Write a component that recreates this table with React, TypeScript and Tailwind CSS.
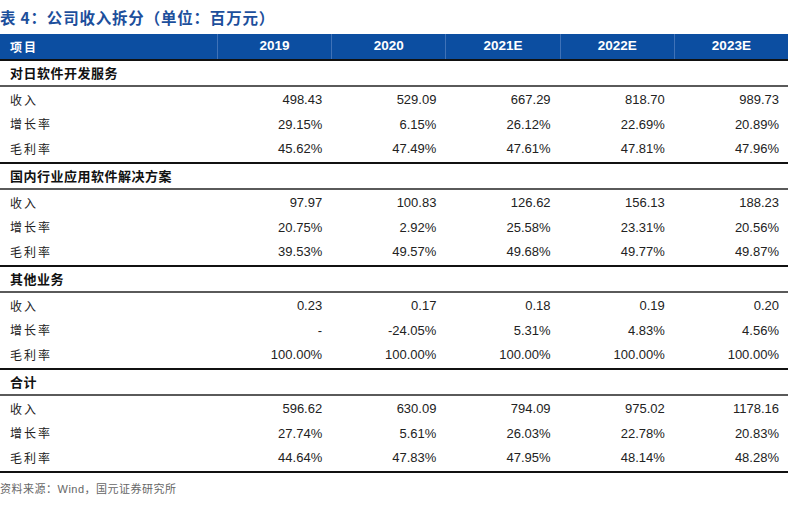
import React from 'react';

type Group = {
  title: string;
  rows: { label: string; values: string[] }[];
};

const years = ['2019', '2020', '2021E', '2022E', '2023E'];

const groups: Group[] = [
  {
    title: '对日软件开发服务',
    rows: [
      { label: '收入', values: ['498.43', '529.09', '667.29', '818.70', '989.73'] },
      { label: '增长率', values: ['29.15%', '6.15%', '26.12%', '22.69%', '20.89%'] },
      { label: '毛利率', values: ['45.62%', '47.49%', '47.61%', '47.81%', '47.96%'] },
    ],
  },
  {
    title: '国内行业应用软件解决方案',
    rows: [
      { label: '收入', values: ['97.97', '100.83', '126.62', '156.13', '188.23'] },
      { label: '增长率', values: ['20.75%', '2.92%', '25.58%', '23.31%', '20.56%'] },
      { label: '毛利率', values: ['39.53%', '49.57%', '49.68%', '49.77%', '49.87%'] },
    ],
  },
  {
    title: '其他业务',
    rows: [
      { label: '收入', values: ['0.23', '0.17', '0.18', '0.19', '0.20'] },
      { label: '增长率', values: ['-', '-24.05%', '5.31%', '4.83%', '4.56%'] },
      { label: '毛利率', values: ['100.00%', '100.00%', '100.00%', '100.00%', '100.00%'] },
    ],
  },
  {
    title: '合计',
    rows: [
      { label: '收入', values: ['596.62', '630.09', '794.09', '975.02', '1178.16'] },
      { label: '增长率', values: ['27.74%', '5.61%', '26.03%', '22.78%', '20.83%'] },
      { label: '毛利率', values: ['44.64%', '47.83%', '47.95%', '48.14%', '48.28%'] },
    ],
  },
];

const cjk = "font-['Noto_Sans_CJK_SC',sans-serif]";
const num = "font-['Liberation_Sans','Noto_Sans_CJK_SC',sans-serif]";

export default function App() {
  return (
    <div className="w-[791px] h-[505px] bg-white overflow-hidden">
      <div className={`h-[34px] pt-[7px] text-[15.5px] font-bold leading-[20px] tracking-[0.8px] text-[#1d4f9c] ${cjk}`}>
        表 4：公司收入拆分（单位：百万元）
      </div>

      <div className="w-[788px]">
        {/* header */}
        <div className="grid grid-cols-[217px_repeat(5,1fr)] h-[27px] bg-[#0c4ea1] border-b-2 border-[#111]">
          <div className={`flex items-center pl-[10px] text-[12px] font-bold tracking-[2px] text-white ${cjk}`}>项目</div>
          {years.map((y) => (
            <div
              key={y}
              className={`flex items-center justify-center border-l border-[#3f72b8] text-[13.5px] font-bold text-white ${num}`}
            >
              {y}
            </div>
          ))}
        </div>

        {groups.map((g) => (
          <div key={g.title} className="border-b-2 border-[#111] pb-[1px]">
            <div className={`flex items-center h-[26px] pl-[10px] border-b-2 border-[#5a5a5a] text-[13px] font-bold tracking-[0.5px] text-[#111] ${cjk}`}>
              {g.title}
            </div>
            {g.rows.map((r, i) => (
              <div
                key={r.label}
                className={`grid grid-cols-[217px_repeat(5,1fr)] ${i === 0 ? 'h-[25px]' : 'h-[24.5px]'} items-center`}
              >
                <div className={`pl-[10px] text-[12px] tracking-[2px] text-[#222] ${cjk}`}>{r.label}</div>
                {r.values.map((v, j) => (
                  <div key={j} className={`pr-[9px] text-right text-[13px] text-[#222] ${num}`}>
                    {v}
                  </div>
                ))}
              </div>
            ))}
          </div>
        ))}
      </div>

      <div className={`pt-[7px] text-[11px] tracking-[0.5px] text-[#666] ${cjk}`}>
        资料来源：<span className={num}>Wind</span>，国元证券研究所
      </div>
    </div>
  );
}
